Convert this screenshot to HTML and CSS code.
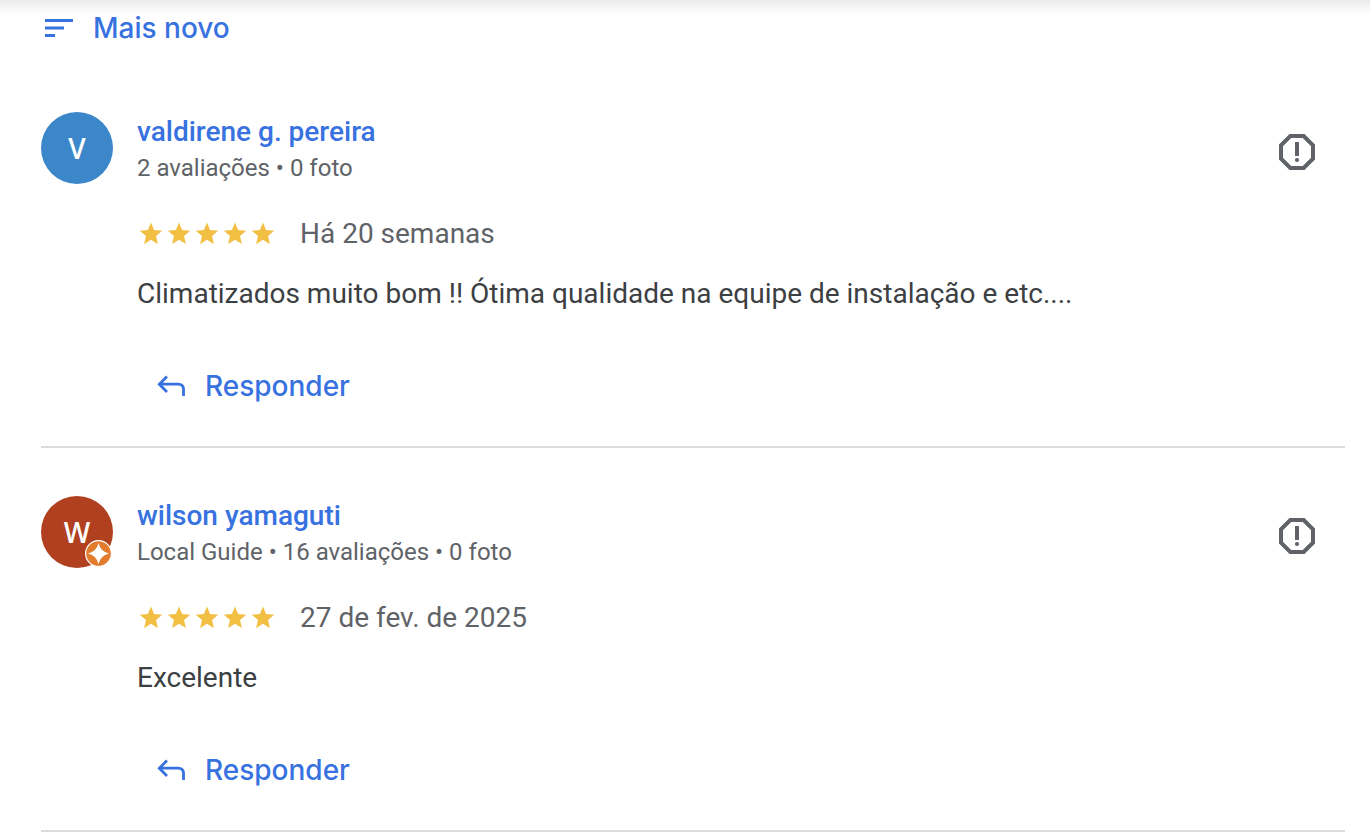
FILE: index.html
```html
<!DOCTYPE html>
<html lang="pt-BR">
<head>
<meta charset="utf-8">
<meta name="viewport" content="width=device-width, initial-scale=1">
<title>Avaliações</title>
<link rel="stylesheet" href="styles.css">
</head>
<body>
<svg class="symbols" aria-hidden="true">
  <symbol id="star" viewBox="0 0 24 24"><path d="M12 .6l3.100 7.400 8.100.7-6.200 5.300 1.900 7.900L12 17.700l-6.900 4.200 1.900-7.900L.8 8.700l8.100-.7z"/></symbol>
  <symbol id="reply" viewBox="0 0 28 22"><path d="M10 1.500L2.300 9.200 10 16.900M2.300 9.200H21q5.500 0 5.500 5.500v6.300" fill="none" stroke="currentColor" stroke-width="2.800"/></symbol>
  <symbol id="report" viewBox="0 0 36 36"><path d="M11.300 2h13.400l9.300 9.300v13.400l-9.300 9.300H11.300L2 24.700V11.300z" fill="none" stroke="currentColor" stroke-width="4"/><path d="M16 8h4v14h-4z"/><circle cx="18" cy="26" r="2.100"/></symbol>
</svg>
<main class="page">
  <button class="action sort" type="button">
    <svg class="sort-icon" viewBox="0 0 28 18" aria-hidden="true"><path d="M0 0h28v3H0zM0 7.500h19v3H0zM0 15h10v3H0z"/></svg>
    <span>Mais novo</span>
  </button>

  <article class="review">
    <div class="avatar blue">V</div>
    <div class="content">
      <header class="head">
        <div>
          <a class="name" href="#">valdirene g. pereira</a>
          <p class="meta">2 avaliações • 0 foto</p>
        </div>
        <button class="report" type="button" aria-label="Denunciar avaliação"><svg viewBox="0 0 36 36"><use href="#report"/></svg></button>
      </header>
      <div class="rating">
        <div class="stars" role="img" aria-label="5 estrelas"><svg><use href="#star"/></svg><svg><use href="#star"/></svg><svg><use href="#star"/></svg><svg><use href="#star"/></svg><svg><use href="#star"/></svg></div>
        <span>Há 20 semanas</span>
      </div>
      <p class="text">Climatizados muito bom !! Ótima qualidade na equipe de instalação e etc....</p>
      <button class="action reply" type="button"><svg class="reply-icon" aria-hidden="true"><use href="#reply"/></svg><span>Responder</span></button>
    </div>
  </article>

  <article class="review">
    <div class="avatar red">W
      <svg class="badge" viewBox="0 0 28 28" aria-hidden="true"><circle cx="13.500" cy="13.500" r="12.900" fill="#e37b2d" stroke="#fff" stroke-width="1.200"/><path d="M13.500 3q2 8.500 10.500 10.500Q15.500 15.500 13.500 24 11.500 15.500 3 13.500 11.500 11.500 13.500 3z" fill="#fff"/></svg>
    </div>
    <div class="content">
      <header class="head">
        <div>
          <a class="name" href="#">wilson yamaguti</a>
          <p class="meta">Local Guide • 16 avaliações • 0 foto</p>
        </div>
        <button class="report" type="button" aria-label="Denunciar avaliação"><svg viewBox="0 0 36 36"><use href="#report"/></svg></button>
      </header>
      <div class="rating">
        <div class="stars" role="img" aria-label="5 estrelas"><svg><use href="#star"/></svg><svg><use href="#star"/></svg><svg><use href="#star"/></svg><svg><use href="#star"/></svg><svg><use href="#star"/></svg></div>
        <span>27 de fev. de 2025</span>
      </div>
      <p class="text">Excelente</p>
      <button class="action reply" type="button"><svg class="reply-icon" aria-hidden="true"><use href="#reply"/></svg><span>Responder</span></button>
    </div>
  </article>
</main>
</body>
</html>
```
FILE: styles.css
```css
* { box-sizing: border-box; }
body {
  margin: 0;
  background: linear-gradient(#ebebeb, #fff 14px) no-repeat #fff;
  color: #3c4043;
  font: 28px/40px Roboto, "Liberation Sans", sans-serif;
}
p { margin: 0; }
button { border: 0; padding: 0; background: none; cursor: pointer; }
svg { display: block; fill: currentColor; }
.symbols { position: absolute; width: 0; height: 0; }
.page { padding: 8px 25px 0 41px; }
.action {
  display: flex;
  align-items: center;
  gap: 20px;
  color: #3871e0;
  font: 500 28px/40px Inter, Roboto, sans-serif;
}
.sort { padding-left: 4px; margin-bottom: 16px; }
.sort-icon { width: 28px; height: 18px; }
.review {
  display: flex;
  gap: 24px;
  padding: 48px 0 40px;
  border-bottom: 2px solid #dadce0;
}
.avatar {
  position: relative;
  flex: none;
  width: 72px;
  height: 72px;
  border-radius: 50%;
  color: #fff;
  font-family: "Open Sans", Roboto, sans-serif;
  font-weight: 600;
  line-height: 72px;
  text-align: center;
}
.blue { background: #3c86ca; }
.red { background: #b04020; }
.badge { position: absolute; right: 0; bottom: 0; width: 28px; height: 28px; }
.content { flex: 1; min-width: 0; }
.head { display: flex; justify-content: space-between; }
.name { display: block; color: #3871e0; font-weight: 500; text-decoration: none; }
.meta { color: #5f6368; font-size: 24px; line-height: 32px; }
.report { align-self: center; margin: 8px 30px 0 0; color: #5f6368; }
.report svg { width: 36px; height: 36px; }
.rating { display: flex; align-items: center; gap: 25px; margin-top: 30px; color: #5f6368; }
.stars { display: flex; gap: 4px; padding-left: 2px; color: #f1bf42; }
.stars svg { width: 24px; height: 24px; }
.text { margin-top: 20px; }
.reply { margin-top: 52px; padding-left: 20px; }
.reply-icon { width: 28px; height: 22px; }
```
